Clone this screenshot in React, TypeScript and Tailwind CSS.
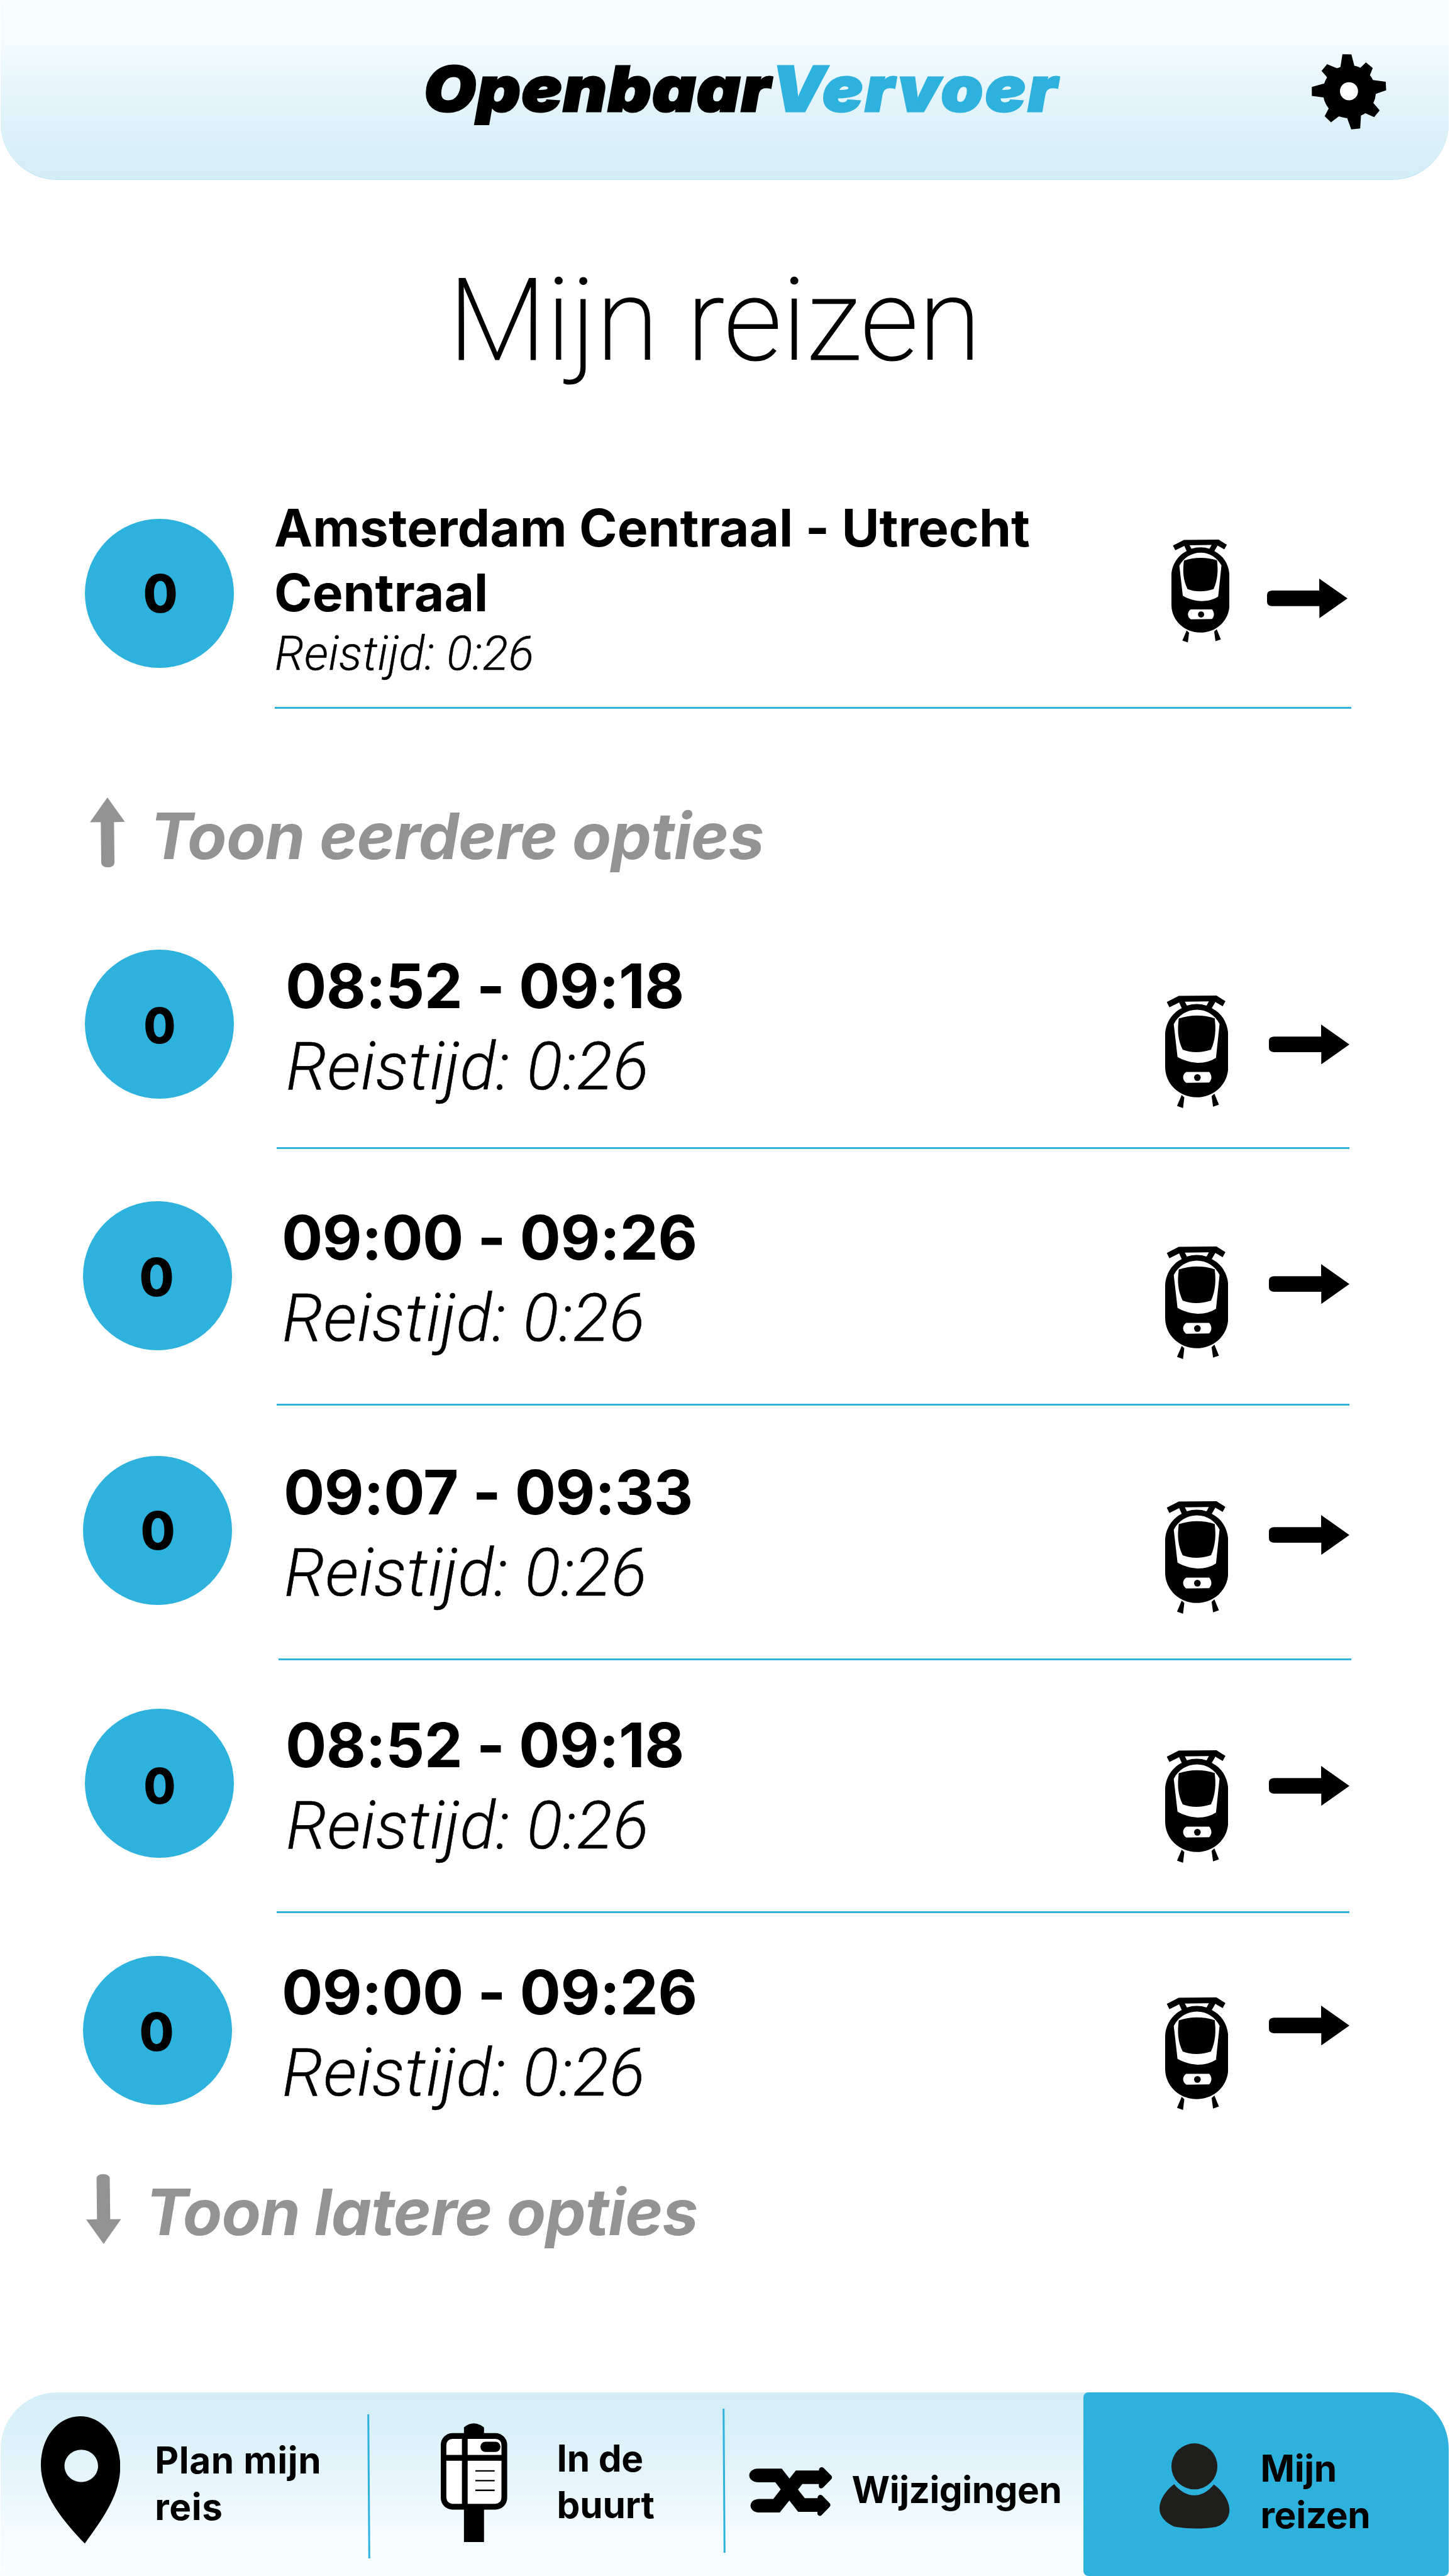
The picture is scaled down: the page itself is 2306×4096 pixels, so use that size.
import type { ReactNode } from "react";

function GearIcon({ className }: { className: string }) {
  return (
    <svg viewBox="150 110 484 488" preserveAspectRatio="none" className={className}>
      <path d="M349 111L407 112L426 185Q447 188 465 198L501 164L545 200L527 246Q539 260 546 278L629 289L632 344L565 367Q563 398 549 426L590 474L554 518L497 492Q484 500 469 508L464 591L406 597L380 525Q352 522 326 513L275 551L234 512L260 462Q235 430 227 391L151 380V322L231 300Q238 279 250 260L214 219L250 175L313 202Q324 199 336 193Z" />
      <circle cx="391.500" cy="350" r="58.500" className="fill-white" />
    </svg>
  );
}

function TramIcon({ className }: { className: string }) {
  return (
    <svg viewBox="184 203 389 728" preserveAspectRatio="none" className={className}>
      <path d="M268 205L500 203L555 240L538 272L493 245L471 284C535 318 572 385 572 460V665C572 775 485 861 378 861C271 861 184 775 184 665V460C184 385 225 315 286 284L270 248L210 279L194 245Z" />
      <path className="fill-white" d="M305 243L453 241L439 268Q378 248 318 268Z" />
      <path className="fill-white" d="M237 388C265 330 320 295 380 295C440 295 490 330 519 386L497 606C465 628 425 639 383 638C340 637 295 622 260 600Z" />
      <path d="M268 351Q378 313 489 350C497 420 495 485 466 553Q372 585 292 553C262 490 258 425 268 351Z" />
      <path className="fill-white" d="M314 697H455C473 718 473 746 455 765L314 767C288 750 288 714 314 697Z" />
      <ellipse cx="382.500" cy="733" rx="20.500" ry="22" />
      <path d="M286 846L302 862L294 931L257 917ZM487 837L515 909L479 922L470 854Z" />
    </svg>
  );
}

function ArrowRight({ className }: { className: string }) {
  return (
    <svg viewBox="822 393 495 258" preserveAspectRatio="none" className={className}>
      <path d="M852 471H1143V393L1317 522L1144 651V572H852Q822 570 822 542V501Q822 473 852 471Z" />
    </svg>
  );
}

function ArrowUp({ className }: { className: string }) {
  return (
    <svg viewBox="92 1187 74 261" preserveAspectRatio="none" className={className}>
      <path d="M129 1187L166 1278L143 1279L144 1432Q143 1448 130 1448Q117 1448 116 1432L115 1279L92 1280Z" />
    </svg>
  );
}

function PinIcon({ className }: { className: string }) {
  return (
    <svg viewBox="86 343 168 823" preserveAspectRatio="none" className={className}>
      <path
        fillRule="evenodd"
        d="M169 343C216 343 254 480 254 668C254 850 218 1000 179 1166C136 1030 86 850 86 660C86 480 122 343 169 343ZM171.500 560C152 560 136 607 136 664C136 721 152 768 171.500 768C191 768 207 721 207 664C207 607 191 560 171.500 560Z"
      />
    </svg>
  );
}

function StopSignIcon({ className }: { className: string }) {
  return (
    <svg viewBox="94 84 430 772" preserveAspectRatio="none" className={className}>
      <path d="M244 111Q308 59 374 111V170H244ZM244 630H374V856H244Z" />
      <rect x="94" y="148" width="430" height="496" rx="76" />
      <path
        className="fill-white"
        d="M170 186H231V290H130V226Q132 188 170 186ZM268 186H448Q486 188 487 226V290H268ZM130 327H231V606H170Q132 604 130 566ZM268 327H487V566Q486 604 448 606H268Z"
      />
      <rect x="351" y="204" width="129" height="66" rx="32" />
      <path d="M318 388H443V398H318ZM318 451H443V461H318ZM318 514H443V524H318Z" />
    </svg>
  );
}

function ShuffleIcon({ className }: { className: string }) {
  return (
    <svg viewBox="78 132 540 318" preserveAspectRatio="none" className={className}>
      <path d="M136 141H291L341 205L382 153H532C530 135 548 127 561 136L612 187Q621 198 612 209L558 265C546 276 528 266 531 251V241H424L396 277L440 333H523C522 314 540 306 553 315L602 366Q610 376 602 388L549 443C537 454 519 444 522 430V421H397L340 348L278 426H150C70 426 70 342 140 338H236L284 276L249 230H140C60 226 62 144 136 141Z" />
    </svg>
  );
}

function PersonIcon({ className }: { className: string }) {
  return (
    <svg viewBox="66 66 454 552" preserveAspectRatio="none" className={className}>
      <circle cx="292" cy="215.500" r="149" />
      <path d="M161 331C240 427 342 427 418 333C475 375 519 438 519 496C519 552 480 595 427 608C340 621 250 621 162 605C105 580 66 540 66 488C66 430 108 370 161 331Z" />
    </svg>
  );
}

function Badge({ className, label }: { className: string; label: string }) {
  return (
    <div className={`flex size-[237px] shrink-0 items-center justify-center rounded-full bg-[#2db1dd] font-[780] ${className}`}>
      <span className={`inline-block scale-x-95 leading-none ${label}`}>0</span>
    </div>
  );
}

type Trip = {
  time: string;
  row: string;
  badge: string;
  label: string;
  body: string;
  text: string;
  tram: string;
  arrow: string;
};

const trips: Trip[] = [
  {
    time: "08:52 - 09:18",
    row: "h-[400px]",
    badge: "ml-[135px]",
    label: "text-[78px] translate-y-[2px]",
    body: "ml-[68px] h-[317px] border-b-[3px]",
    text: "pl-[14px]",
    tram: "mt-[73px]",
    arrow: "mt-[119px]",
  },
  {
    time: "09:00 - 09:26",
    row: "h-[405px]",
    badge: "ml-[132px]",
    label: "text-[84px] translate-y-[2px] -translate-x-[1px]",
    body: "ml-[71px] h-[325px] border-b-[3px]",
    text: "pl-[8px]",
    tram: "mt-[72px]",
    arrow: "mt-[100px]",
  },
  {
    time: "09:07 - 09:33",
    row: "h-[402px]",
    badge: "ml-[132px]",
    label: "text-[84px] translate-x-[1px]",
    body: "ml-[74px] h-[325px] border-b-[3px] pr-[3px]",
    text: "pl-[8px]",
    tram: "mt-[72px]",
    arrow: "mt-[94px]",
  },
  {
    time: "08:52 - 09:18",
    row: "h-[393px]",
    badge: "ml-[135px]",
    label: "text-[78px] translate-y-[4px]",
    body: "ml-[68px] h-[325px] border-b-[3px]",
    text: "pl-[14px]",
    tram: "mt-[66px]",
    arrow: "mt-[91px]",
  },
  {
    time: "09:00 - 09:26",
    row: "h-[345px]",
    badge: "ml-[132px]",
    label: "text-[84px] translate-y-[2px] -translate-x-[1px]",
    body: "ml-[71px] h-[326px]",
    text: "pl-[8px]",
    tram: "mt-[66px]",
    arrow: "mt-[79px]",
  },
];

function TripRow({ trip }: { trip: Trip }) {
  return (
    <li className={`flex items-start ${trip.row}`}>
      <Badge className={trip.badge} label={trip.label} />
      <div className={`flex w-[1706px] items-start border-[#2db1dd] ${trip.body}`}>
        <div className={`pt-[3px] whitespace-nowrap ${trip.text}`}>
          <p className="text-[97px] leading-[110px] font-[730] tracking-[-0.55px]">{trip.time}</p>
          <p className="mt-[14px] pl-[1px] font-['Roboto',sans-serif] text-[105px] leading-[120px] font-light tracking-[0.8px] italic [-webkit-text-stroke:0.6px_#000]">
            Reistijd: 0:26
          </p>
        </div>
        <TramIcon className={`ml-auto h-[179px] w-[100.500px] shrink-0 ${trip.tram}`} />
        <ArrowRight className={`ml-[65px] h-[63.400px] w-[128px] shrink-0 ${trip.arrow}`} />
      </div>
    </li>
  );
}

function MoreLink({ className, icon, children }: { className: string; icon: ReactNode; children: ReactNode }) {
  return (
    <div className={`flex h-[124px] items-start text-[102px] leading-[124px] font-bold whitespace-nowrap text-[#939393] italic ${className}`}>
      {icon}
      <span>{children}</span>
    </div>
  );
}

const navText = "shrink-0 text-[58.5px] leading-[73.7px] font-bold whitespace-nowrap";

export default function App() {
  return (
    <div className="flex h-[4096px] w-[2306px] flex-col overflow-hidden bg-white font-['Inter',sans-serif] text-black [font-feature-settings:'calt'_0]">
      <header className="mr-[2px] ml-[1px] flex h-[286px] shrink-0 items-start rounded-b-[90px] border-b border-[#b9e3f1] bg-[linear-gradient(#f8feff_0%,#f6fdff_20%,#e5f5fb_52%,#d8f0f7_80%,#d4eef7_100%)]">
        <h2 className="mt-[86px] ml-[673px] flex text-[99px] leading-[110px] font-black whitespace-nowrap italic">
          <span className="inline-block w-[553px] origin-left scale-x-[1.08] tracking-[1.6px] [-webkit-text-stroke:3px_#000]">
            Openbaar
          </span>
          <span className="inline-block w-[450px] origin-left scale-x-[1.08] tracking-[3.2px] text-[#2db1dd] [-webkit-text-stroke:3px_#2db1dd]">
            Vervoer
          </span>
        </h2>
        <GearIcon className="mt-[86px] mr-[99px] ml-auto h-[120px] w-[119px]" />
      </header>

      <main className="flex shrink-0 flex-col">
        <h1 className="mt-[134px] ml-[713px] font-['Roboto',sans-serif] text-[181px] leading-[180px] font-extralight tracking-[0.3px] whitespace-nowrap [-webkit-text-stroke:1.2px_#000]">
          Mijn reizen
        </h1>

        <section className="mt-[188px] flex items-start">
          <Badge className="mt-[37px] ml-[135px]" label="text-[84px] translate-x-[2px]" />
          <div className="ml-[65px] flex h-[339px] w-[1712px] items-start border-b-[3px] border-[#2db1dd]">
            <div className="whitespace-nowrap">
              <p className="-ml-[1px] text-[82px] leading-[103.2px] font-bold">
                Amsterdam Centraal - Utrecht
                <br />
                Centraal
              </p>
              <p className="font-['Roboto',sans-serif] text-[75.5px] leading-[90px] font-light tracking-[0.4px] italic [-webkit-text-stroke:0.5px_#000]">
                Reistijd: 0:26
              </p>
            </div>
            <TramIcon className="mt-[70px] ml-auto h-[163.600px] w-[92.400px] shrink-0" />
            <ArrowRight className="mt-[132px] mr-[6px] ml-[60px] h-[63px] w-[128px] shrink-0" />
          </div>
        </section>

        <MoreLink
          className="mt-[140px] tracking-[-0.7px]"
          icon={<ArrowUp className="mt-[1px] mr-[40px] ml-[143px] h-[111px] w-[55.600px] fill-[#939393]" />}
        >
          Toon eerdere opties
        </MoreLink>

        <ul className="mt-[119px]">
          {trips.map((trip, i) => (
            <TripRow key={i} trip={trip} />
          ))}
        </ul>

        <MoreLink
          className="tracking-[-0.9px]"
          icon={<ArrowUp className="mt-[2px] mr-[39px] ml-[137px] h-[111px] w-[55.600px] rotate-180 fill-[#939393]" />}
        >
          Toon latere opties
        </MoreLink>
      </main>

      <nav className="mr-[2px] ml-[1px] mt-auto flex h-[292px] shrink-0 items-start rounded-t-[90px] bg-[linear-gradient(#d4eef7_0%,#d9f1f8_20%,#e5f5fb_45%,#f6fdff_80%,#f8feff_100%)]">
        <div className="flex w-[584px] items-start">
          <PinIcon className="mt-[38px] ml-[64px] h-[202.400px] w-[126.300px] shrink-0" />
          <span className={`mt-[71px] ml-[55px] tracking-[0.6px] ${navText}`}>
            Plan mijn
            <br />
            reis
          </span>
        </div>
        <div className="mt-[35px] h-[229px] w-[3px] shrink-0 rotate-[-0.4deg] bg-[#2db1dd]" />
        <div className="flex w-[562px] items-start">
          <StopSignIcon className="mt-[48.500px] ml-[113px] h-[189.600px] w-[105.600px] shrink-0" />
          <span className={`mt-[68px] ml-[79px] tracking-[-0.2px] ${navText}`}>
            In de
            <br />
            buurt
          </span>
        </div>
        <div className="mt-[26px] h-[229px] w-[3px] shrink-0 rotate-[-0.4deg] bg-[#2db1dd]" />
        <div className="flex w-[570px] items-start">
          <ShuffleIcon className="mt-[119px] ml-[38px] h-[78px] w-[132.600px] shrink-0" />
          <span className={`mt-[118px] ml-[31px] tracking-[-0.5px] ${navText}`}>Wijzigingen</span>
        </div>
        <div className="flex h-full flex-1 items-start rounded-tl-[8px] rounded-tr-[90px] rounded-b-[8px] bg-[#2db1dd]">
          <PersonIcon className="mt-[81px] ml-[121px] h-[135.600px] w-[111.500px] shrink-0 fill-[#1e1e1c]" />
          <span className={`mt-[84px] ml-[49px] tracking-[-0.3px] ${navText}`}>
            Mijn
            <br />
            reizen
          </span>
        </div>
      </nav>
    </div>
  );
}
